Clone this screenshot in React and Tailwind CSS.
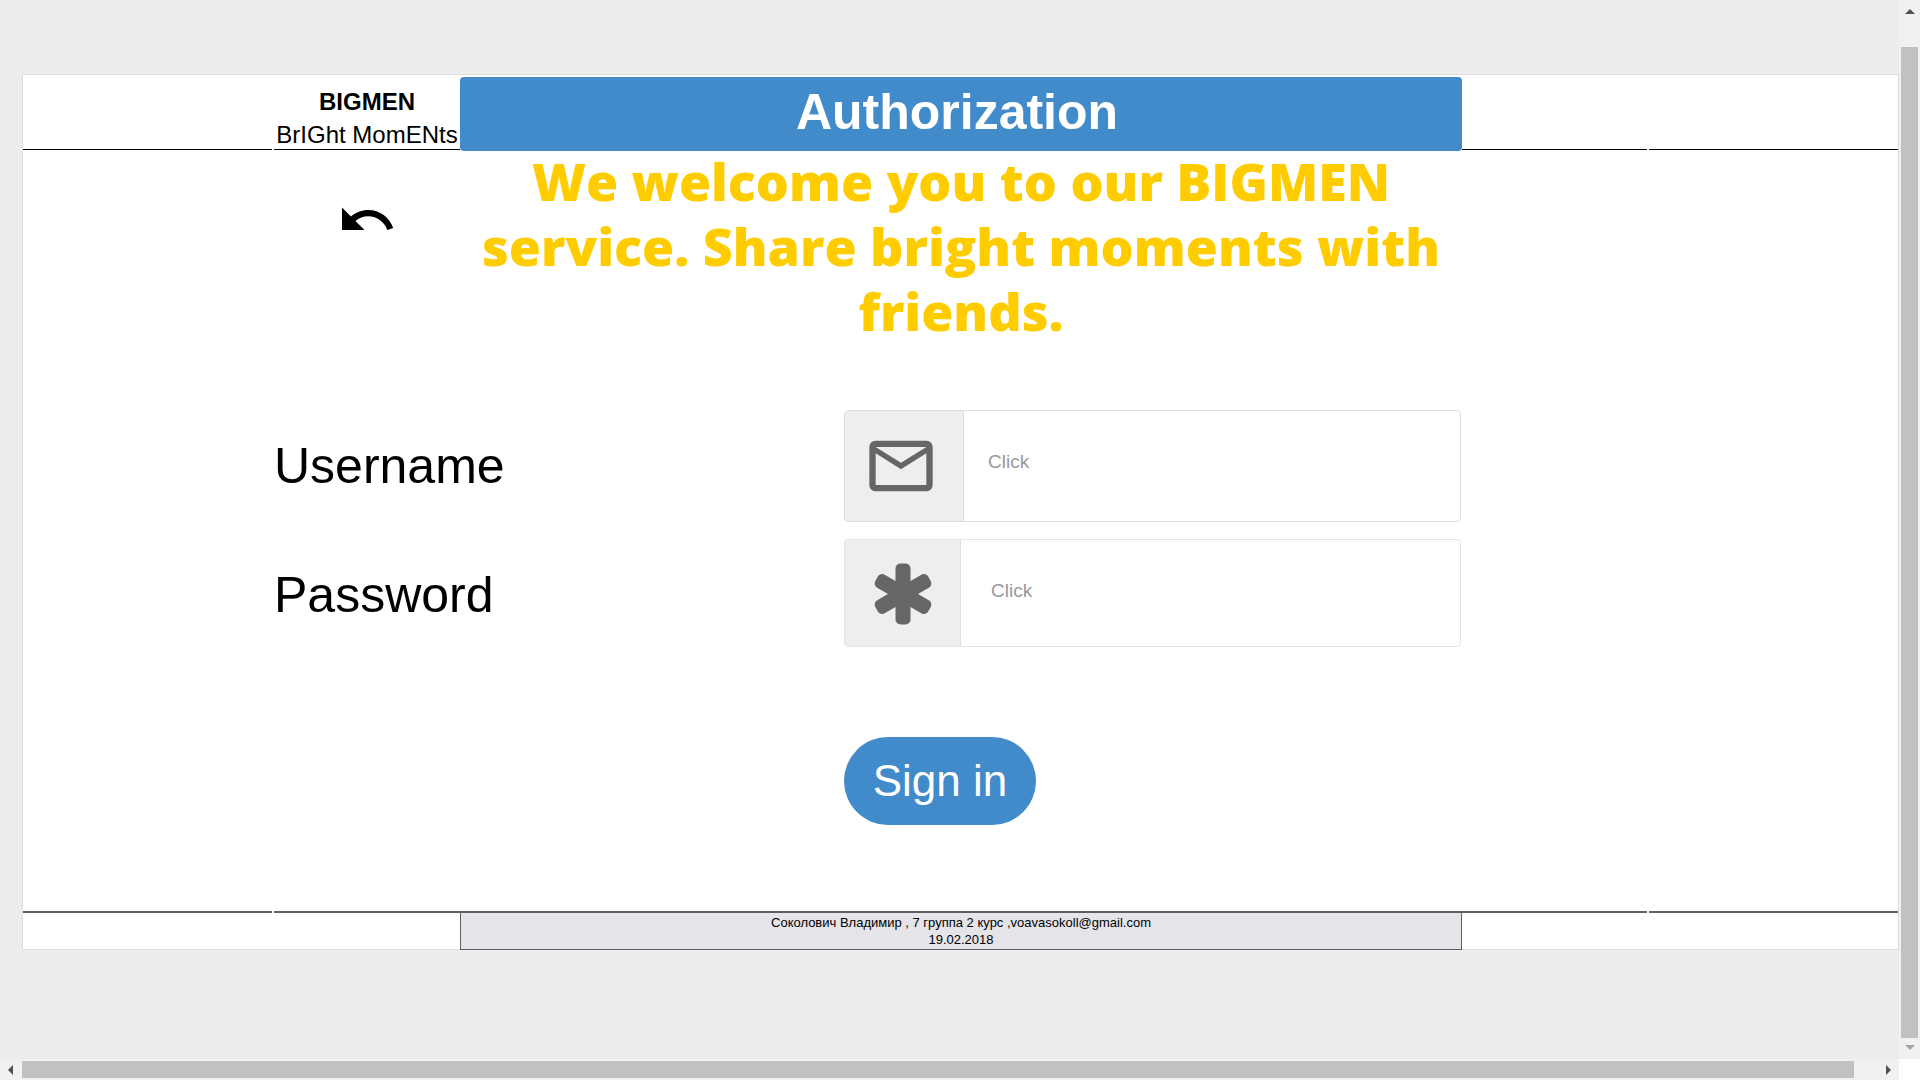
import React from "react";
import { MdMailOutline, MdUndo } from "react-icons/md";

const COLUMNS = "grid grid-cols-[251fr_186fr_1002fr_187fr_249fr]";

function AsteriskIcon() {
  return (
    <svg width="62" height="62" viewBox="-31 -31 62 62" fill="currentColor" aria-hidden="true">
      <rect x="-7.5" y="-30.5" width="15" height="61" rx="5" />
      <rect x="-7.5" y="-30.5" width="15" height="61" rx="5" transform="rotate(60)" />
      <rect x="-7.5" y="-30.5" width="15" height="61" rx="5" transform="rotate(-60)" />
    </svg>
  );
}

function Arrow({ points, className }) {
  return (
    <svg width="10" height="10" viewBox="0 0 10 10" fill="currentColor" className={className} aria-hidden="true">
      <polygon points={points} />
    </svg>
  );
}

function Header() {
  return (
    <header className={`${COLUMNS} grid-rows-[75px]`}>
      <div className="mr-0.5 border-b border-black" />
      <div className="border-b border-black pt-2.5 text-center text-2xl leading-[33px] whitespace-nowrap">
        <p className="font-bold">BIGMEN</p>
        <p>BrIGht MomENts</p>
      </div>
      <div className="-mb-px mt-0.5 flex items-center justify-center rounded-sm bg-[#428bca] pr-2 pb-1">
        <h1 className="text-[50px] leading-[60px] font-bold text-white">Authorization</h1>
      </div>
      <div className="mr-0.5 border-b border-black" />
      <div className="border-b border-black" />
    </header>
  );
}

function Footer() {
  return (
    <footer className={`${COLUMNS} -mb-px h-[39px] text-[13px] leading-[17px]`}>
      <div className="mr-0.5 border-t-2 border-[#5f5f5f]" />
      <div className="border-t-2 border-[#5f5f5f]" />
      <div className="border border-t-2 border-[#5f5f63] bg-[#e5e4e9] pt-px text-center">
        <p>Соколович Владимир , 7 группа 2 курс ,voavasokoll@gmail.com</p>
        <p>19.02.2018</p>
      </div>
      <div className="mr-0.5 border-t-2 border-[#5f5f5f]" />
      <div className="border-t-2 border-[#5f5f5f]" />
    </footer>
  );
}

function LoginForm() {
  return (
    <form className="mt-[65px] grid grid-cols-[570fr_617fr] items-center pr-px" onSubmit={(e) => e.preventDefault()}>
      <label htmlFor="username" className="text-[50px] leading-[60px]">Username</label>
      <div className="flex h-28 overflow-hidden rounded border border-[#ddd]">
        <span className="flex w-[119px] shrink-0 items-center border-r border-[#ddd] bg-[#eee] pl-[18px] text-[#666]">
          <MdMailOutline size={76} />
        </span>
        <input id="username" type="text" placeholder="Click" className="min-w-0 flex-1 pb-2 pl-6 text-[19px] outline-none placeholder:text-[#999]" />
      </div>

      <label htmlFor="password" className="mt-5 text-[50px] leading-[60px]">Password</label>
      <div className="mt-[17px] flex h-[108px] overflow-hidden rounded border border-[#e3e3e3]">
        <span className="flex w-[116px] shrink-0 items-center border-r border-[#ddd] bg-[#eee] pt-0.5 pl-[27px] text-[#666]">
          <AsteriskIcon />
        </span>
        <input id="password" type="password" placeholder="Click" className="min-w-0 flex-1 pb-1 pl-[30px] text-[19px] outline-none placeholder:text-[#999]" />
      </div>

      <button type="submit" className="col-start-2 mt-[90px] mb-[86px] h-[88px] w-48 rounded-full bg-[#428bca] text-[44px] leading-[52px] text-white">
        Sign in
      </button>
    </form>
  );
}

export default function App() {
  return (
    <div className="grid min-h-screen grid-cols-[1fr_21px] grid-rows-[1fr_21px] bg-[#ededed] font-['Liberation_Sans',Arial,sans-serif] text-black">
      <div className="pt-[74px] pl-[22px]">
        <div className="border border-[#ddd] bg-white">
          <Header />
          <main className="grid grid-cols-[251fr_1188fr_436fr]">
            <div className="col-start-2">
              <div className="grid grid-cols-[186fr_1002fr]">
                <a href="#back" aria-label="Back" className="mt-10 ml-[63px] h-[60px] w-[60px]">
                  <MdUndo size={60} />
                </a>
                <h2 className="-mt-0.5 mb-0.5 text-center font-['Open_Sans',sans-serif] text-[52px] leading-[65px] font-extrabold whitespace-nowrap text-[#ffcc00]">
                  <span className="block">We welcome you to our BIGMEN</span>
                  <span className="block">service. Share bright moments with</span>
                  <span className="block">friends.</span>
                </h2>
              </div>
              <LoginForm />
            </div>
          </main>
          <Footer />
        </div>
      </div>

      <div className="flex flex-col items-center bg-[#f1f1f1] pt-[7px] pb-[7px]" aria-hidden="true">
        <Arrow points="0,7 5,2 10,7" className="text-[#505050]" />
        <div className="mt-[30px] w-[17px] flex-1 bg-[#c1c1c1]" />
        <Arrow points="0,3 10,3 5,8" className="mt-1 text-[#a3a3a3]" />
      </div>

      <div className="flex items-center bg-[#f1f1f1] pr-1.5 pl-1.5" aria-hidden="true">
        <Arrow points="7,0 7,10 2,5" className="text-[#505050]" />
        <div className="ml-1.5 h-[17px] flex-1 bg-[#c1c1c1]" />
        <Arrow points="3,0 8,5 3,10" className="ml-[29px] text-[#505050]" />
      </div>
      <div className="bg-white" />
    </div>
  );
}
